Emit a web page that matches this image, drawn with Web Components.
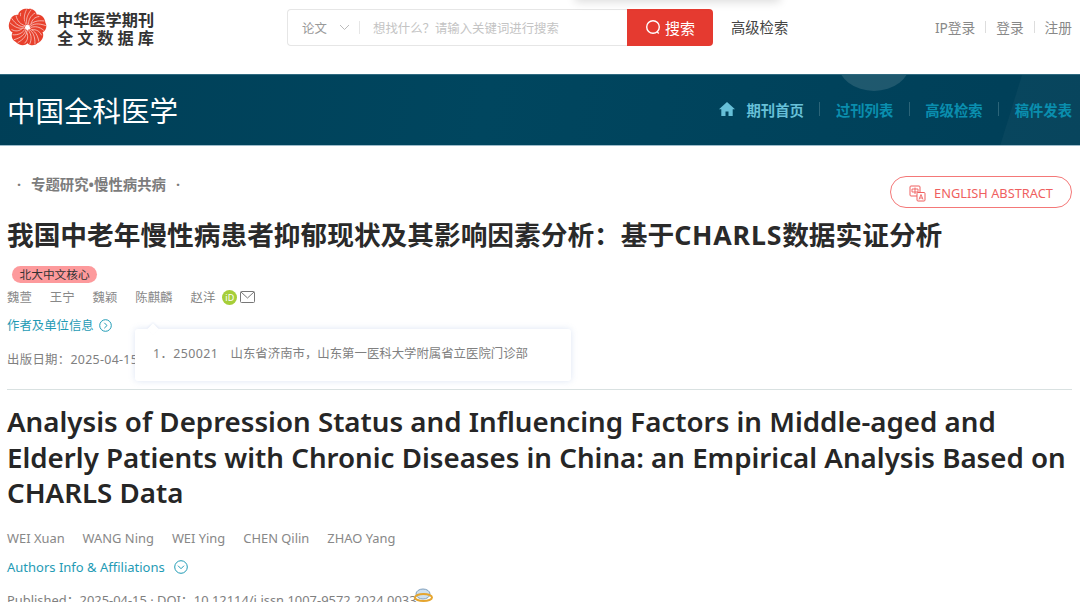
<!DOCTYPE html>
<html lang="zh">
<head>
<meta charset="utf-8">
<title>中国全科医学</title>
<style>
html, body { margin: 0; padding: 0; background: #fff; }
body { width: 1080px; height: 602px; overflow: hidden; font-family: "Noto Sans", "Noto Sans CJK SC", sans-serif; color: #666; }
</style>
</head>
<body>
<top-bar></top-bar>
<journal-band></journal-band>
<article-head></article-head>

<script>
class topBar extends HTMLElement {
    constructor() {
        super();
        this.attachShadow({ mode: 'open' });
        this.shadowRoot.innerHTML = `
            <style>
                :host { display: flex; height: 74px; padding: 9px 8px 0 8px; box-sizing: border-box; align-items: flex-start; position: relative; }
                .logo { display: flex; align-items: center; width: 279px; height: 37px; gap: 10px; }
                .logo svg { width: 39px; height: 39px; flex: none; }
                .name { color: #333; font: 700 16.2px/18px "Noto Sans CJK SC", sans-serif; white-space: nowrap; }
                .name div:last-child { letter-spacing: 4px; }
                .search { display: flex; width: 426px; height: 37px; }
                .box { flex: 1; display: flex; align-items: center; border: 1px solid #e6e6e6; border-right: 0; border-radius: 4px 0 0 4px; box-sizing: border-box; font-size: 12.4px; }
                .type { color: #999; margin-left: 14px; width: 37px; }
                .box svg { width: 11px; height: 7px; }
                .sep { width: 1px; height: 13px; background: #e6e6e6; margin: 0 13px 0 9px; }
                .hint { color: #c4c4c4; font-size: 12.4px; }
                .go { width: 86px; background: #e53a30; color: #fff; border-radius: 0 4px 4px 0; display: flex; align-items: center; justify-content: center; gap: 3px; font-size: 15px; }
                .go svg { width: 17px; height: 17px; }
                .adv { margin-left: 18px; line-height: 37px; font-size: 14.3px; color: #444; }
                .login { margin-left: auto; display: flex; align-items: center; height: 35px; font-size: 13.7px; color: #888; }
                .login i { width: 1px; height: 12px; background: #ddd; margin: 0 10px; }
                .glow { position: absolute; left: 575px; top: -14px; width: 205px; height: 14px; box-shadow: 0 2px 10px rgba(0,0,0,.14); }
            </style>
            <div class="glow"></div>
            <div class="logo">
                <svg viewBox="-20 -20 40 40">
                    <defs>
                        <g id="petal">
                            <path fill="#e8402c" d="M0 -1.500C-4 -5 -9.500 -8 -9.500 -13.500C-8.500 -18 -3 -20 1 -19C4 -20 9 -17.500 9.500 -13C9.500 -9 5 -4 0 -1.500Z"/>
                            <path fill="none" stroke="#fff" stroke-width=".55" d="M0 -2.500C-2 -7 -1 -12 4 -18.500M1 -3C1 -8 3 -12 8 -15M-1.500 -3.500C-4 -7 -4 -12 -1 -18.500M-2.500 -4.500C-6 -7 -8 -10 -7 -15"/>
                        </g>
                    </defs>
                    <use href="#petal"/>
                    <use href="#petal" transform="rotate(72)"/>
                    <use href="#petal" transform="rotate(144)"/>
                    <use href="#petal" transform="rotate(216)"/>
                    <use href="#petal" transform="rotate(288)"/>
                    <circle r="2.500" fill="#fff"/>
                </svg>
                <div class="name"><div>中华医学期刊</div><div>全文数据库</div></div>
            </div>
            <div class="search">
                <div class="box">
                    <span class="type">论文</span>
                    <svg viewBox="0 0 11 7" fill="none" stroke="#bbb"><path d="M1 1l4.500 4.500L10 1"/></svg>
                    <span class="sep"></span>
                    <span class="hint">想找什么？请输入关键词进行搜索</span>
                </div>
                <div class="go">
                    <svg viewBox="0 0 17 17" fill="none" stroke="#fff" stroke-width="1.4"><circle cx="8" cy="8" r="6.300"/><path d="M12 12.800l1.800 1.700"/></svg>
                    <span>搜索</span>
                </div>
            </div>
            <span class="adv">高级检索</span>
            <div class="login"><span>IP登录</span><i></i><span>登录</span><i></i><span>注册</span></div>
        `;
    }
}

class journalBand extends HTMLElement {
    constructor() {
        super();
        this.attachShadow({ mode: 'open' });
        this.shadowRoot.innerHTML = `
            <style>
                :host { display: flex; align-items: center; height: 72px; padding: 0 8px 0 7px; box-sizing: border-box; color: #fff; position: relative; overflow: hidden;
                    background: linear-gradient(100deg, #003f57 0, #00465f 45%, #003f58 100%); border-bottom: 1px solid #9dbccb; border-top: 1px solid #2f6a80; }
                .bg { position: absolute; left: 838px; top: -40px; width: 72px; height: 56px; border-radius: 50%; background: rgba(255,255,255,.12); }
                .wedge { position: absolute; left: 1000px; top: 0; width: 80px; height: 71px; background: rgba(255,255,255,.03); clip-path: polygon(22px 0, 80px 0, 80px 71px, 0 71px); }
                h1 { margin: 0; font: 400 28.5px/1 "Noto Sans CJK SC", sans-serif; position: relative; }
                nav { margin-left: auto; display: flex; align-items: center; padding-bottom: 2px; font-size: 14.35px; font-weight: 700; color: #0a8eae; position: relative; }
                nav svg { width: 16px; height: 14px; margin-right: 12px; }
                nav b { color: #67c0d8; font-weight: 700; }
                nav i { width: 1px; height: 14px; background: #2b6478; margin: 0 15.500px; }
            </style>
            <div class="bg"></div><div class="wedge"></div>
            <h1>中国全科医学</h1>
            <nav>
                <svg viewBox="0 0 16 14" fill="#67c0d8"><path d="M8 0L0 7.200h2.300V14h4.200V9.500h3V14h4.200V7.200H16z"/></svg>
                <b>期刊首页</b><i></i><span>过刊列表</span><i></i><span>高级检索</span><i></i><span>稿件发表</span>
            </nav>
        `;
    }
}

class authorName extends HTMLElement {
    constructor() {
        super();
        this.attachShadow({ mode: 'open' });
        this.shadowRoot.innerHTML = `
            <style>
                :host { display: inline-flex; align-items: center; color: #888; white-space: nowrap; }
            </style>
            <slot></slot>
        `;
    }
}

class articleHead extends HTMLElement {
    constructor() {
        super();
        this.attachShadow({ mode: 'open' });
        this.shadowRoot.innerHTML = `
            <style>
                :host { display: block; padding: 0 8px 0 7px; position: relative; }
                .column { display: flex; justify-content: space-between; align-items: flex-start; height: 71px; box-sizing: border-box; }
                .col-name { display: flex; gap: 10px; padding: 29px 0 0 10px; font-size: 14.4px; font-weight: 700; color: #7c7c7c; line-height: 20px; }
                .en-btn { margin-top: 30px; display: flex; align-items: center; justify-content: center; gap: 8px; width: 182px; height: 32px; box-sizing: border-box; padding-top: 2px; border: 1px solid #f47878; border-radius: 16px; color: #ef5f5f; font-size: 12.8px; }
                .en-btn svg { width: 17px; height: 17px; }
                h2 { margin: 0; font: 700 26.7px/36px "Noto Sans", "Noto Sans CJK SC", sans-serif; color: #2a2a2a; white-space: nowrap; }
                h2 span { letter-spacing: .8px; }
                .tag { display: inline-block; vertical-align: top; margin-top: 13px; margin-left: 5px; padding: 0 7.500px; height: 17px; line-height: 17px; border-radius: 9px; background: #fd9a9c; color: #333; font-size: 11.7px; }
                .authors { display: flex; align-items: center; height: 20px; margin-top: 4px; font-size: 12.4px; gap: 18px; }
                .authors .last { display: inline-flex; align-items: center; }
                .orcid { width: 15px; height: 15px; border-radius: 50%; background: #a6ce39; color: #fff; font-size: 9px; line-height: 15px; text-align: center; margin: 0 3px 0 7px; }
                .mail { width: 15px; height: 12px; }
                .info { display: flex; align-items: center; gap: 5px; height: 20px; margin-top: 8px; color: #1f9bb5; font-size: 12.4px; }
                .info svg { width: 13px; height: 13px; }
                .date { margin-top: 15px; height: 20px; line-height: 20px; font-size: 12.4px; color: #808080; letter-spacing: .3px; }
                .pop { position: absolute; left: 135px; top: 183px; width: 436px; height: 52px; box-sizing: border-box; padding: 0 18px; background: #fff; border-radius: 3px; box-shadow: 0 0 6px rgba(120,150,210,.25); font-size: 12.4px; line-height: 49px; color: #808080; white-space: pre; }
                .pop span { letter-spacing: .4px; }
                .pop::before { content: ""; position: absolute; left: 14px; top: -4px; width: 8px; height: 8px; background: #fff; transform: rotate(45deg); box-shadow: -1px -1px 2px rgba(120,150,210,.12); }
                hr { margin: 19px 0 0; border: 0; border-top: 1px solid #d9e1e1; }
                h3 { margin: 14px 0 0; font: 600 27.7px/35.500px "Noto Sans", "Noto Sans CJK SC", sans-serif; color: #262626; }
                .en-authors { display: flex; gap: 18px; margin-top: 17px; height: 20px; align-items: center; font-size: 12.9px; }
                .en-info { display: flex; align-items: center; gap: 9px; margin-top: 9px; height: 20px; color: #1f9bb5; font-size: 13px; }
                .en-info svg { width: 14px; height: 14px; }
                .pub { margin-top: 13px; font-size: 12.9px; color: #808080; position: relative; white-space: nowrap; }
                .oa { position: absolute; left: 407px; top: -2px; width: 19px; height: 16px; }
            </style>
            <div class="column">
                <div class="col-name"><span>·</span><span>专题研究•慢性病共病</span><span>·</span></div>
                <div class="en-btn">
                    <svg viewBox="0 0 17 17" fill="none" stroke="#ef5f5f"><rect x="1" y="1" width="10" height="10" rx="1"/><rect x="8" y="7.500" width="8" height="8.500" rx="1" fill="#fff"/><path d="M3 4h6v3H3zM6 2.500V9M12 9.500l-2 5M12 9.500l2 5M10.700 13h2.600" stroke-width=".9"/></svg>
                    <span>ENGLISH ABSTRACT</span>
                </div>
            </div>
            <h2>我国中老年慢性病患者抑郁现状及其影响因素分析：基于<span>CHARLS</span>数据实证分析</h2>
            <div class="tag">北大中文核心</div>
            <div class="authors">
                <author-name>魏萱</author-name><author-name>王宁</author-name><author-name>魏颖</author-name><author-name>陈麒麟</author-name>
                <span class="last"><author-name>赵洋</author-name><span class="orcid">iD</span><svg class="mail" viewBox="0 0 15 12" fill="none" stroke="#777"><rect x=".5" y=".5" width="14" height="11" rx="1"/><path d="M1 1l6.500 6L14 1"/></svg></span>
            </div>
            <div class="info"><span>作者及单位信息</span><svg viewBox="0 0 13 13" fill="none" stroke="#1f9bb5"><circle cx="6.500" cy="6.500" r="5.800"/><path d="M5.300 3.800L8 6.500 5.300 9.200"/></svg></div>
            <div class="date">出版日期：2025-04-15</div>
            <div class="pop"><span>1．250021</span>　山东省济南市，山东第一医科大学附属省立医院门诊部</div>
            <hr>
            <h3>Analysis of Depression Status and Influencing Factors in Middle-aged and Elderly Patients with Chronic Diseases in China: an Empirical Analysis Based on CHARLS Data</h3>
            <div class="en-authors">
                <author-name>WEI Xuan</author-name><author-name>WANG Ning</author-name><author-name>WEI Ying</author-name><author-name>CHEN Qilin</author-name><author-name>ZHAO Yang</author-name>
            </div>
            <div class="en-info"><span>Authors Info &amp; Affiliations</span><svg viewBox="0 0 14 14" fill="none" stroke="#1f9bb5"><circle cx="7" cy="7" r="6.300"/><path d="M4 5.700l3 3 3-3"/></svg></div>
            <div class="pub">Published：2025-04-15 · DOI：10.12114/j.issn.1007-9572.2024.0033
                <svg class="oa" viewBox="0 0 19 16"><ellipse cx="9" cy="6" rx="7" ry="5" fill="#cfe0ee" stroke="#7f9fbd"/><ellipse cx="9.500" cy="9.500" rx="8.500" ry="3.500" fill="none" stroke="#e5a52f" stroke-width="2"/></svg>
            </div>
        `;
    }
}

customElements.define('author-name', authorName);
customElements.define('top-bar', topBar);
customElements.define('journal-band', journalBand);
customElements.define('article-head', articleHead);
</script>
</body>
</html>
